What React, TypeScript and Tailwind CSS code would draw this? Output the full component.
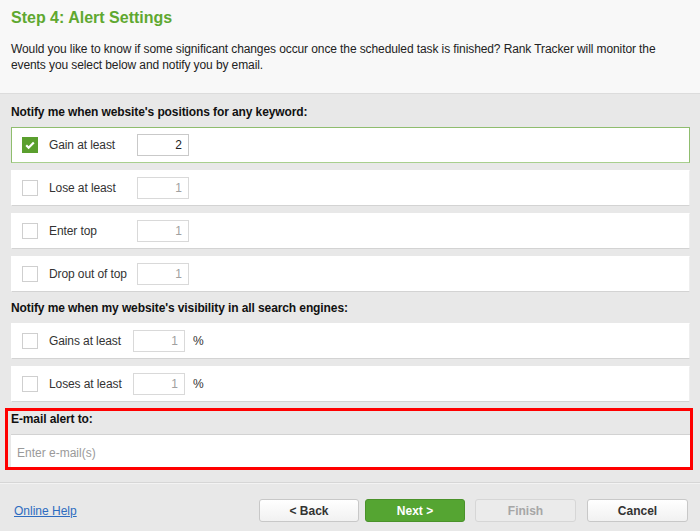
import React from "react";

type Row = { label: string; value: string; checked?: boolean; percent?: boolean };

const positionRows: Row[] = [
  { label: "Gain at least", value: "2", checked: true },
  { label: "Lose at least", value: "1" },
  { label: "Enter top", value: "1" },
  { label: "Drop out of top", value: "1" },
];

const visibilityRows: Row[] = [
  { label: "Gains at least", value: "1", percent: true },
  { label: "Loses at least", value: "1", percent: true },
];

function Checkbox({ checked }: { checked?: boolean }) {
  if (checked) {
    return (
      <span className="flex h-[16px] w-[16px] shrink-0 items-center justify-center bg-[#5a9f2e]">
        <svg width="12" height="12" viewBox="0 0 12 12">
          <path d="M2.2 6.3l2.4 2.4 5.2-5.3" fill="none" stroke="#fff" strokeWidth="2.2" />
        </svg>
      </span>
    );
  }
  return <span className="h-[16px] w-[16px] shrink-0 border border-[#cfcfcf] bg-white" />;
}

function AlertRow({ row }: { row: Row }) {
  return (
    <div
      className={
        row.checked
          ? "flex h-[36px] items-center border border-[#8fbd6e] border-b-[#a8cf8e] bg-white pl-[10px]"
          : "flex h-[36px] items-center border border-white border-r-[#eeeeee] border-b-[#d3d3d3] bg-white pl-[10px]"
      }
    >
      <Checkbox checked={row.checked} />
      <span
        className={
          row.percent
            ? "ml-[11px] w-[84px] text-[12px] tracking-[-0.1px] text-[#333]"
            : "ml-[11px] w-[88px] text-[12px] tracking-[-0.1px] text-[#333]"
        }
      >
        {row.label}
      </span>
      <div
        className={
          row.checked
            ? "flex h-[22px] w-[52px] items-center justify-end border border-[#c9c9c9] bg-white pr-[6px] text-[12px] text-[#222]"
            : "flex h-[22px] w-[52px] items-center justify-end border border-[#d9d9d9] bg-white pr-[6px] text-[12px] text-[#a0a0a0]"
        }
      >
        {row.value}
      </div>
      {row.percent && <span className="ml-[8px] text-[12px] text-[#333]">%</span>}
    </div>
  );
}

export default function App() {
  return (
    <div className="h-[531px] w-[700px] overflow-hidden bg-[#e8e8e8] font-['Liberation_Sans',Arial,sans-serif] text-[#222]">
      <div className="h-[94px] border-b border-[#dcdcdc] bg-[#f8f8f8] pl-[11px] pr-[10px] pt-[7px]">
        <h1 className="text-[16px] font-bold leading-[22px] text-[#5fa830]">Step 4: Alert Settings</h1>
        <p className="mt-[12px] text-[12px] leading-[16px] tracking-[-0.1px] text-[#222]">
          Would you like to know if some significant changes occur once the scheduled task is finished? Rank Tracker will monitor the events you select below and notify you by email.
        </p>
      </div>

      <div className="pl-[11px] pr-[10px]">
        <h2 className="pt-[10px] text-[12px] font-bold leading-[16px] tracking-[-0.1px] text-[#111]">
          Notify me when website's positions for any keyword:
        </h2>
        <div className="mt-[7px] flex flex-col gap-[7px]">
          {positionRows.map((row) => (
            <AlertRow key={row.label} row={row} />
          ))}
        </div>

        <h2 className="mt-[8px] text-[12px] font-bold leading-[16px] tracking-[-0.1px] text-[#111]">
          Notify me when my website's visibility in all search engines:
        </h2>
        <div className="mt-[7px] flex flex-col gap-[7px]">
          {visibilityRows.map((row) => (
            <AlertRow key={row.label} row={row} />
          ))}
        </div>

        <div className="ml-[-6px] mr-[-3px] mt-[6px] border-[3px] border-[#ff0000] pl-[3px]">
          <div className="text-[12px] font-bold leading-[16px] tracking-[-0.1px] text-[#111]">E-mail alert to:</div>
          <div className="mt-[7px] flex h-[33px] items-center border-t border-[#d2d2d2] bg-white pl-[6px] pt-[3px] text-[12px] text-[#9a9a9a]">
            Enter e-mail(s)
          </div>
        </div>
      </div>

      <div className="mt-[12px] border-t border-[#d6d6d6] shadow-[inset_0_1px_0_#f3f3f3]">
        <div className="flex items-center pl-[14px] pr-[12px] pt-[16px]">
          <a href="#" className="text-[12px] leading-[16px] text-[#2e6cc0] underline">
            Online Help
          </a>
          <div className="ml-auto flex">
            <button className="h-[23px] w-[100px] rounded-[3px] border border-[#c8c8c8] bg-gradient-to-b from-white to-[#f1f1f1] text-[12px] font-bold text-[#333]">
              &lt; Back
            </button>
            <button className="ml-[6px] h-[23px] w-[100px] rounded-[3px] border border-[#4a922a] bg-[#55a532] text-[12px] font-bold text-white">
              Next &gt;
            </button>
            <button className="ml-[10px] h-[23px] w-[101px] rounded-[3px] border border-[#d6d6d6] bg-[#ebebeb] text-[12px] font-bold text-[#a6a6a6]">
              Finish
            </button>
            <button className="ml-[11px] h-[23px] w-[101px] rounded-[3px] border border-[#c8c8c8] bg-gradient-to-b from-white to-[#f1f1f1] text-[12px] font-bold text-[#333]">
              Cancel
            </button>
          </div>
        </div>
      </div>
    </div>
  );
}
